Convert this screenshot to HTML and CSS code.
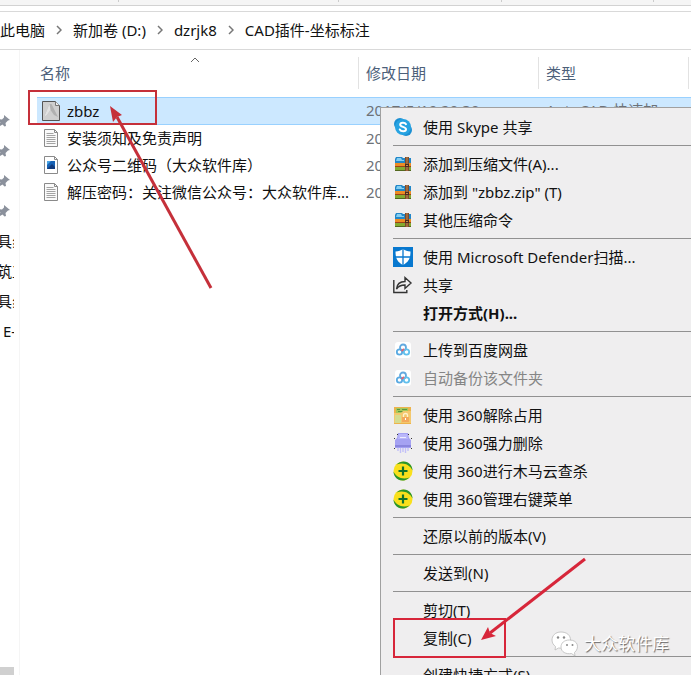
FILE: index.html
```html
<!DOCTYPE html>
<html lang="zh-CN">
<head>
<meta charset="utf-8">
<title>CAD插件-坐标标注</title>
<link rel="stylesheet" href="styles.css">
</head>
<body>
<svg class="defs" aria-hidden="true">
  <symbol id="chevron" viewBox="0 0 6 10"><path d="M1 1l4 4-4 4" fill="none" stroke="#777" stroke-width="1.5"/></symbol>
  <symbol id="pin" viewBox="0 0 12 12"><path d="M6 0l6 5-2 .5L7.500 8l.5 3-1.500.5-2-2L0 12v-1.500l2.500-3L.500 5.500 1 4l3 .5L6 2.500z" fill="#8b919c"/></symbol>
  <symbol id="text-file" viewBox="0 0 18 20"><path d="M2.500 1.500h10l3 3v14h-13z" fill="#fafafa" stroke="#8a8a8a"/><path d="M12.500 1.500v3h3" fill="none" stroke="#8a8a8a"/><path d="M4.500 5.500h7M4.500 7.500h9M4.500 9.500h9M4.500 11.500h9M4.500 13.500h9M4.500 15.500h9" stroke="#a3a3a3"/></symbol>
  <symbol id="image-file" viewBox="0 0 18 20"><path d="M2.500 1.500h10l3 3v14h-13z" fill="#fff" stroke="#8a8a8a"/><path d="M12.500 1.500v3h3" fill="none" stroke="#8a8a8a"/><path d="M5 6h8v8H5z" fill="#1762b5"/><path d="M5 6h4l-4 4z" fill="#4aa5e5"/><path d="M5 14l5-5 3 3v2z" fill="#123a7c"/></symbol>
  <symbol id="cad-file" viewBox="0 0 18 20"><path d="M.500.500h13l4 4v15H.500z" fill="#cfcfcf" stroke="#555"/><path d="M13.500.500v4h4" fill="#eee" stroke="#777"/><path d="M2 16L7.500 3h2L16 16l-4-2-3.500-5L5 14z" fill="#b0b0b0"/><path d="M7.500 3L2 16l3-2 3.500-5z" fill="#e2e2e2"/></symbol>
  <symbol id="skype" viewBox="0 0 20 20"><circle cx="7" cy="7" r="6" fill="#1b8fd2"/><circle cx="13" cy="13" r="6" fill="#1b8fd2"/><circle cx="10" cy="10" r="8" fill="#27a3e2"/><path d="M13 7.200C12 5.200 7.200 5.100 7.200 7.700c0 2.600 5.800 1.700 5.800 4.500 0 2.700-5 2.600-6.200.3" fill="none" stroke="#fff" stroke-width="2" stroke-linecap="round"/></symbol>
  <symbol id="archive" viewBox="0 0 20 20"><path d="M3 3h6l1 1h8v6H2V5z" fill="#2287c8"/><path d="M4 4h4l1 2h2v1H3z" fill="#83cef2"/><path d="M2 9h16v4H2z" fill="#ed8c24"/><path d="M2 12h16v1H2z" fill="#9c4218"/><path d="M2 13h16v4H2z" fill="#83aa31"/><path d="M2 16h16v1H2z" fill="#53681e"/><path d="M12 3h4v14h-4z" fill="#7d4a2c"/><path d="M13.500 3h1v14h-1z" fill="#c48e50"/><path d="M12 10h4v3h-4z" fill="#4a2c20"/><path d="M13 11h2v1h-2z" fill="#c48e50"/></symbol>
  <symbol id="defender" viewBox="0 0 20 20"><path d="M0 0h20v20H0z" fill="#0878cf"/><path d="M10 2C8 3.500 5.500 4.500 2.500 4.500c0 6 1.500 10.500 7.500 13.500 6-3 7.500-7.500 7.500-13.500-3 0-5.500-1-7.500-2.500z" fill="#fff"/><path d="M10 2v16M2.500 10h15" stroke="#0878cf" stroke-width="1.300"/></symbol>
  <symbol id="share" viewBox="0 0 20 20"><path d="M.800 5v12.500h13V15M3.500 14c.5-5 3.500-7.500 8.500-7.500V2.500L18 8l-6 5.500V10c-4 0-6.500 1-8.500 4z" fill="none" stroke="#333" stroke-width="1.400"/></symbol>
  <symbol id="cloud" viewBox="0 0 20 20"><rect x="2" y="2" width="16" height="16" rx="3" fill="#fff"/><g fill="none" stroke-width="1.800"><circle cx="10" cy="7.500" r="3" stroke="#63a9df"/><circle cx="6.500" cy="12" r="2.700" stroke="#5aaae2"/><circle cx="13.500" cy="12" r="2.700" stroke="#62c0ed"/><path d="M8.500 11l2.500-2" stroke="#df6574"/></g></symbol>
  <symbol id="unlock" viewBox="0 0 20 20"><path d="M1 2h17v17H1z" fill="#edb34c"/><path d="M3 3h12v5H3z" fill="#a5c95c"/><path d="M4 4h3v1H4zM9 4h5v1H9zM5 6h8v1H5z" fill="#5d9440"/><path d="M1 8h7l2-2h8v12H1z" fill="#f3c86e"/><path d="M2 10h6v8H2z" fill="#d5dc90"/><path d="M10.500 12v-2c0-2 4-2 4 0v2" fill="none" stroke="#fff1cc" stroke-width="1.300"/><path d="M9 12h7v5H9z" fill="#f3a95c"/><path d="M12 13h1v2h-1z" fill="#fff"/></symbol>
  <symbol id="shredder" viewBox="0 0 20 20"><path d="M5 0h10l1 5 2 2v8H2V7l2-2z" fill="#a5a2f2"/><path d="M6 1h8l1 5H5z" fill="#bab7fa"/><path d="M7 4h6v1H7z" fill="#eeedff"/><path d="M2 12h16v2H2z" fill="#8a86de"/><path d="M5 15v3M7.500 15v5M10 15v4M12.500 15v5M15 15v3" stroke="#c2c0f8" stroke-width="1.400"/><path d="M4 1h1v1H4zM15 1h1v1h-1zM1 5h1v1H1zM18 5h1v1h-1zM1 15h1v1H1zM18 15h1v1h-1z" fill="#333"/></symbol>
  <symbol id="safe" viewBox="0 0 20 20"><circle cx="10" cy="10" r="9.500" fill="#f9e01c"/><path d="M3.500 3.500C8-1 15-.5 18 4.500c1 1.500 1.500 3.500 1.500 5C17 4 11 1 3.500 3.500z" fill="#2a962c"/><path d="M16.500 16.500C12 21 5 20.500 2 15.500 1 14 .500 12 .500 10.500 3 16 9 19 16.500 16.500z" fill="#2a962c"/><path d="M10 5.500v9M5.500 10h9" stroke="#12732b" stroke-width="2.200"/></symbol>
</svg>

<div class="tool-strip"><span></span><span></span><span></span><span></span></div>
<nav class="address" aria-label="路径">
  <a href="#">此电脑</a><svg class="chevron"><use href="#chevron"/></svg>
  <a href="#">新加卷 (D:)</a><svg class="chevron"><use href="#chevron"/></svg>
  <a href="#">dzrjk8</a><svg class="chevron"><use href="#chevron"/></svg>
  <a href="#">CAD插件-坐标标注</a>
</nav>
<main class="explorer">
  <aside class="sidebar">
    <svg class="pin"><use href="#pin"/></svg>
    <svg class="pin"><use href="#pin"/></svg>
    <svg class="pin"><use href="#pin"/></svg>
    <svg class="pin"><use href="#pin"/></svg>
    <a class="place" href="#">具纟</a>
    <a class="place" href="#">筑工</a>
    <a class="place" href="#">具纟</a>
    <a class="place drive" href="#">E-</a>
    <div class="scroll-thumb"></div>
  </aside>
  <section class="files">
    <table>
      <colgroup><col class="name-col"><col class="date-col"><col class="type-col"><col></colgroup>
      <thead>
        <tr>
          <th><span class="head first">名称<svg class="sort" viewBox="0 0 10 6"><path d="M1 5l4-4 4 4" fill="none" stroke="#666"/></svg></span></th>
          <th><span class="head">修改日期</span></th>
          <th><span class="head">类型</span></th>
          <th><span class="head"></span></th>
        </tr>
      </thead>
      <tbody>
        <tr class="selected"><td><span class="file"><svg><use href="#cad-file"/></svg>zbbz</span></td><td>2017/5/19 20:30</td><td>AutoCAD 快速加</td><td></td></tr>
        <tr><td><span class="file"><svg><use href="#text-file"/></svg>安装须知及免责声明</span></td><td>20</td><td></td><td></td></tr>
        <tr><td><span class="file"><svg><use href="#image-file"/></svg>公众号二维码（大众软件库）</span></td><td>20</td><td></td><td></td></tr>
        <tr><td><span class="file"><svg><use href="#text-file"/></svg>解压密码：关注微信公众号：大众软件库...</span></td><td>20</td><td></td><td></td></tr>
      </tbody>
    </table>
  </section>
</main>

<div class="menu">
  <button><svg><use href="#skype"/></svg>使用 Skype 共享</button>
  <hr>
  <button><svg><use href="#archive"/></svg>添加到压缩文件(A)...</button>
  <button><svg><use href="#archive"/></svg>添加到 "zbbz.zip" (T)</button>
  <button><svg><use href="#archive"/></svg>其他压缩命令</button>
  <hr>
  <button><svg><use href="#defender"/></svg>使用 Microsoft Defender扫描...</button>
  <button><svg><use href="#share"/></svg>共享</button>
  <button class="default"><svg></svg>打开方式(H)...</button>
  <hr>
  <button><svg><use href="#cloud"/></svg>上传到百度网盘</button>
  <button disabled><svg><use href="#cloud"/></svg>自动备份该文件夹</button>
  <hr>
  <button><svg><use href="#unlock"/></svg>使用 360解除占用</button>
  <button><svg><use href="#shredder"/></svg>使用 360强力删除</button>
  <button><svg><use href="#safe"/></svg>使用 360进行木马云查杀</button>
  <button><svg><use href="#safe"/></svg>使用 360管理右键菜单</button>
  <hr>
  <button><svg></svg>还原以前的版本(V)</button>
  <hr>
  <button><svg></svg>发送到(N)</button>
  <hr>
  <button><svg></svg>剪切(T)</button>
  <button><svg></svg>复制(C)</button>
  <hr>
  <button><svg></svg>创建快捷方式(S)</button>
</div>

<svg class="marks" aria-hidden="true">
  <g fill="none" stroke="#c5303a" stroke-width="2"><rect x="29" y="91" width="127" height="33"/><path d="M211 288L117 117" stroke-width="3"/></g>
  <path d="M110 106l12 9-5 2-4 5z" fill="#c5303a"/>
  <g fill="none" stroke="#d7263a" stroke-width="2"><rect x="394" y="619" width="111" height="38"/><path d="M585 559l-95 74" stroke-width="3"/></g>
  <path d="M481 640l7-13 2 6 6 3z" fill="#d7263a"/>
</svg>
<div class="watermark">
  <svg viewBox="0 0 28 26"><g fill="#fff" stroke="#bbb" stroke-width=".8"><path d="M10 1C4 1 1 5 1 9c0 3 1.500 5 3.500 6.500L4 19l3.500-2c6 1 12-2 12-8 0-5-4-8-9.500-8z"/><path d="M18.500 9C13 9 10 12 10 16c0 5 5 7.500 10.500 6.500L24 25l-.5-3.500c5-4 4-12.500-5-12.500z"/></g><g fill="#888"><circle cx="7" cy="6.500" r="1.200"/><circle cx="13" cy="6.500" r="1.200"/><circle cx="16" cy="14" r="1"/><circle cx="21.500" cy="14" r="1"/></g></svg>
  <span>大众软件库</span>
</div>
</body>
</html>
```
FILE: styles.css
```css
* {
  box-sizing: border-box;
}

body {
  position: relative;
  display: flex;
  flex-direction: column;
  height: 100vh;
  margin: 0;
  overflow: hidden;
  background: #fff;
  color: #111;
  font: 15px/20px "Noto Sans", "Noto Sans CJK SC", sans-serif;
}

a {
  color: inherit;
  text-decoration: none;
}

.defs {
  display: none;
}

.tool-strip {
  display: grid;
  grid-template-columns: 119px 220px 163px 152px;
  height: 6px;
  flex: none;
  border-bottom: 1px solid #d2d2d2;
  background: #f5f5f5;
}

.tool-strip span {
  height: 2px;
  border-right: 1px solid #ccc;
}

.address {
  display: flex;
  align-items: center;
  gap: 11px;
  height: 39px;
  margin-top: 5px;
  padding-bottom: 2px;
  flex: none;
  border: solid #d9d9d9;
  border-width: 1px 0;
  white-space: nowrap;
}

.chevron {
  width: 6px;
  height: 10px;
}

.explorer {
  display: flex;
  flex: 1;
  min-height: 0;
}

.sidebar {
  display: flex;
  flex-direction: column;
  width: 20px;
  padding: 56px 5px 0 0;
  flex: none;
  border-right: 1px solid #f5f5f5;
}

.pin {
  width: 12px;
  height: 12px;
  margin: 9px 0 9px -2px;
  flex: none;
}

.place {
  height: 30px;
  flex: none;
  overflow: hidden;
  text-indent: -3px;
  line-height: 30px;
  white-space: nowrap;
}

.drive {
  text-indent: 3px;
}

.scroll-thumb {
  height: 8px;
  margin-top: auto;
  flex: none;
  background: #d0d0d0;
}

.files {
  flex: 1;
  min-width: 0;
  padding-left: 17px;
}

table {
  width: 100%;
  table-layout: fixed;
  border-collapse: separate;
  border-spacing: 0;
}

.name-col {
  width: 321px;
}

.date-col {
  width: 180px;
}

.type-col {
  width: 150px;
}

th {
  height: 47px;
  padding: 0 0 2px;
  color: #4c607a;
  font-weight: 400;
  text-align: left;
}

.head {
  display: flex;
  align-items: center;
  height: 32px;
  padding-left: 7px;
  border-left: 1px solid #e2e2e2;
}

.first {
  justify-content: space-between;
  padding-left: 3px;
  border-left: 0;
}

.sort {
  width: 10px;
  height: 6px;
  margin: 0 158px 26px 0;
}

td {
  height: 27px;
  padding: 0 0 2px 8px;
  color: #6d7278;
  line-height: 20px;
  white-space: nowrap;
}

td:first-child {
  padding-left: 5px;
  color: #111;
}

.selected td {
  height: 28px;
  border: solid #99d1ff;
  border-width: 1px 0;
  background: #cce8ff;
}

.selected td:first-child {
  padding-bottom: 0;
}

.file {
  display: flex;
  align-items: center;
  gap: 7px;
}

.file svg {
  width: 18px;
  height: 20px;
  flex: none;
}

.menu {
  position: absolute;
  top: 107px;
  right: 0;
  left: 380px;
  padding: 5px 0 5px 12px;
  border: solid #a0a0a0;
  border-width: 1px 0 1px 1px;
  background: #efeeef;
}

.menu button {
  display: flex;
  align-items: center;
  gap: 10px;
  width: 100%;
  height: 28px;
  padding: 0;
  border: 0;
  background: none;
  color: #111;
  font: inherit;
  text-align: left;
  white-space: nowrap;
}

.menu .default {
  font-weight: 700;
}

.menu button:disabled {
  color: #858585;
}

.menu button svg {
  width: 20px;
  height: 20px;
  flex: none;
}

.menu hr {
  height: 1px;
  margin: 4px 0;
  border: 0;
  background: #919191;
}

.marks {
  position: absolute;
  inset: 0;
  width: 100%;
  height: 100%;
  pointer-events: none;
}

.watermark {
  position: absolute;
  right: 22px;
  bottom: 18px;
  display: flex;
  align-items: center;
  gap: 5px;
  color: #fff;
  font-size: 17px;
  line-height: 26px;
  text-shadow: 1px 1px 1px #666;
}

.watermark svg {
  width: 28px;
  height: 26px;
}
```
